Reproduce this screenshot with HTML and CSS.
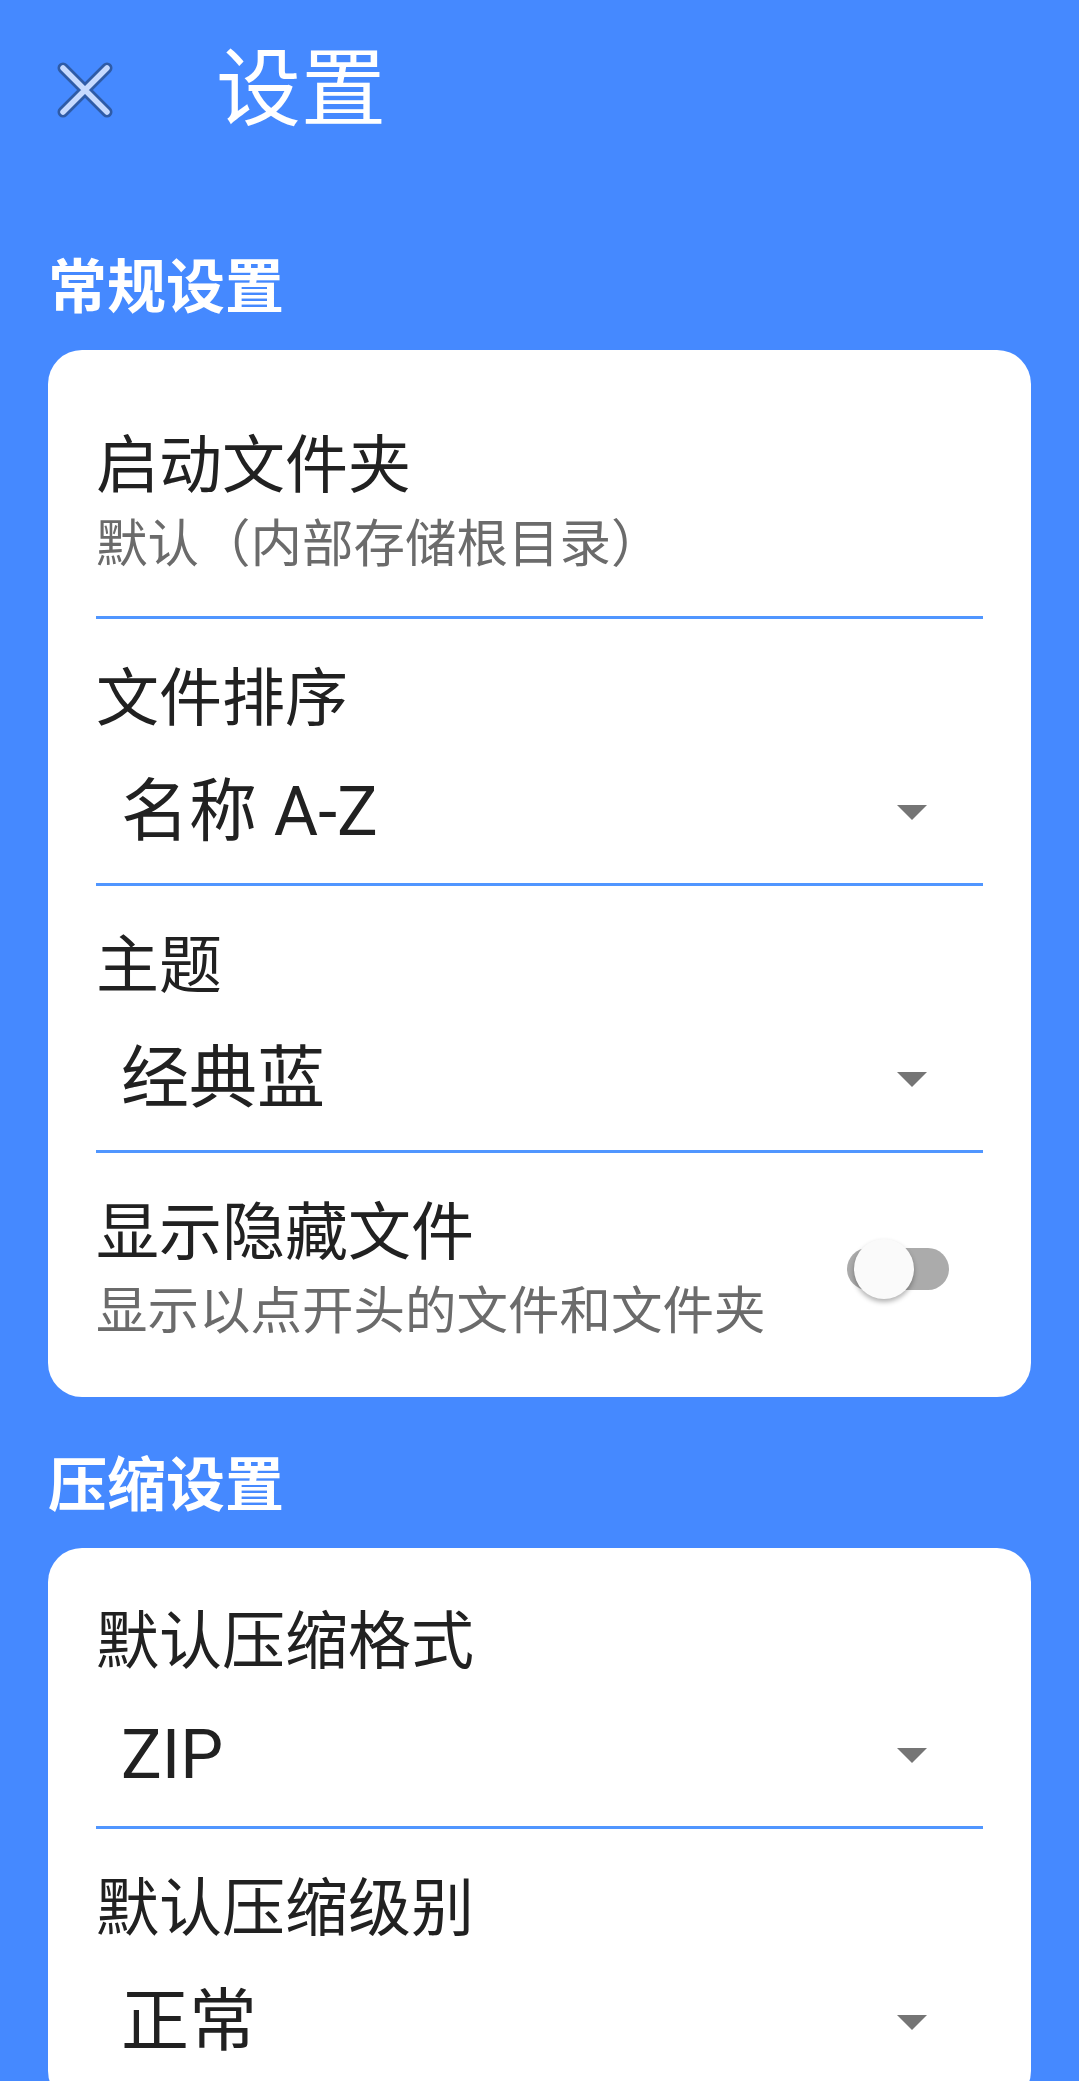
FILE: index.html
```html
<!DOCTYPE html>
<html lang="zh-CN">
<head>
    <meta charset="UTF-8">
    <meta name="viewport" content="width=device-width, initial-scale=1.0">
    <title>设置</title>
    <link rel="stylesheet" href="styles.css">
</head>
<body>
    <div class="topbar">
        <button class="close-btn" aria-label="关闭">
            <svg width="58" height="58" viewBox="0 0 58 58">
                <path d="M7 7 L51 51 M51 7 L7 51" stroke="#2f5ba6" stroke-width="11" stroke-linecap="round" fill="none"/>
                <path d="M7 7 L51 51 M51 7 L7 51" stroke="#c6daff" stroke-width="5.5" stroke-linecap="round" fill="none"/>
            </svg>
        </button>
        <h1 class="page-title">设置</h1>
    </div>

    <div class="content">
        <h2 class="section-title">常规设置</h2>
        <div class="card">
            <div class="item item-first">
                <div class="item-title">启动文件夹</div>
                <div class="item-sub">默认（内部存储根目录）</div>
            </div>
            <div class="item select-item">
                <div class="item-title">文件排序</div>
                <div class="select">
                    <span class="select-value">名称 A-Z</span>
                    <span class="arrow"></span>
                </div>
            </div>
            <div class="item select-item">
                <div class="item-title">主题</div>
                <div class="select">
                    <span class="select-value">经典蓝</span>
                    <span class="arrow"></span>
                </div>
            </div>
            <div class="item toggle-item">
                <div class="item-text">
                    <div class="item-title">显示隐藏文件</div>
                    <div class="item-sub">显示以点开头的文件和文件夹</div>
                </div>
                <div class="switch">
                    <div class="track"></div>
                    <div class="thumb"></div>
                </div>
            </div>
        </div>

        <h2 class="section-title">压缩设置</h2>
        <div class="card">
            <div class="item select-item">
                <div class="item-title">默认压缩格式</div>
                <div class="select">
                    <span class="select-value">ZIP</span>
                    <span class="arrow"></span>
                </div>
            </div>
            <div class="item select-item">
                <div class="item-title">默认压缩级别</div>
                <div class="select">
                    <span class="select-value">正常</span>
                    <span class="arrow"></span>
                </div>
            </div>
        </div>
    </div>
</body>
</html>
```

FILE: styles.css
```css
body {
    margin: 0;
    padding: 0;
    background-color: #4589ff;
    font-family: Roboto, "Noto Sans CJK SC", sans-serif;
    color: #212121;
}

.topbar {
    display: flex;
    align-items: center;
    height: 96px;
    padding: 42px 0 61px 56px;
}

.close-btn {
    width: 58px;
    height: 58px;
    padding: 0;
    border: none;
    background: none;
    display: flex;
}

.page-title {
    margin: 0 0 0 102px;
    font-size: 85px;
    line-height: 96px;
    font-weight: normal;
    color: #fff;
}

.content {
    padding: 0 48px;
}

.section-title {
    margin: 55px 0 28px;
    font-size: 59px;
    line-height: 68px;
    font-weight: bold;
    color: #fff;
}

.card {
    background: #fff;
    border-radius: 34px;
    padding: 14px 48px 12px;
}

.item {
    padding: 44px 0;
    border-bottom: 3px solid #5096ff;
}

.item:last-child {
    border-bottom: none;
}

.item-first {
    padding-top: 66px;
    padding-bottom: 42px;
}

.select-item {
    padding-bottom: 21px;
}

.item-title {
    font-size: 63px;
    line-height: 72px;
}

.item-sub {
    margin-top: 14px;
    font-size: 51.5px;
    line-height: 58px;
    color: #6b6b6b;
}

/* dropdown */
.select {
    display: flex;
    align-items: center;
    justify-content: space-between;
    height: 100px;
    margin-top: 27px;
    padding: 0 56px 0 25px;
}

.select-value {
    font-size: 68px;
    line-height: 100px;
}

.arrow {
    width: 0;
    height: 0;
    border-left: 15px solid transparent;
    border-right: 15px solid transparent;
    border-top: 15px solid #757575;
}

/* switch */
.toggle-item {
    display: flex;
    align-items: center;
    justify-content: space-between;
}

.switch {
    position: relative;
    width: 102px;
    height: 60px;
    margin-right: 34px;
}

.track {
    position: absolute;
    left: 0;
    top: 9px;
    width: 102px;
    height: 42px;
    border-radius: 21px;
    background: #ababab;
}

.thumb {
    position: absolute;
    left: 7px;
    top: 0;
    width: 60px;
    height: 60px;
    border-radius: 50%;
    background: #fafafa;
    box-shadow: 0 3px 5px rgba(0, 0, 0, 0.3);
}
```
